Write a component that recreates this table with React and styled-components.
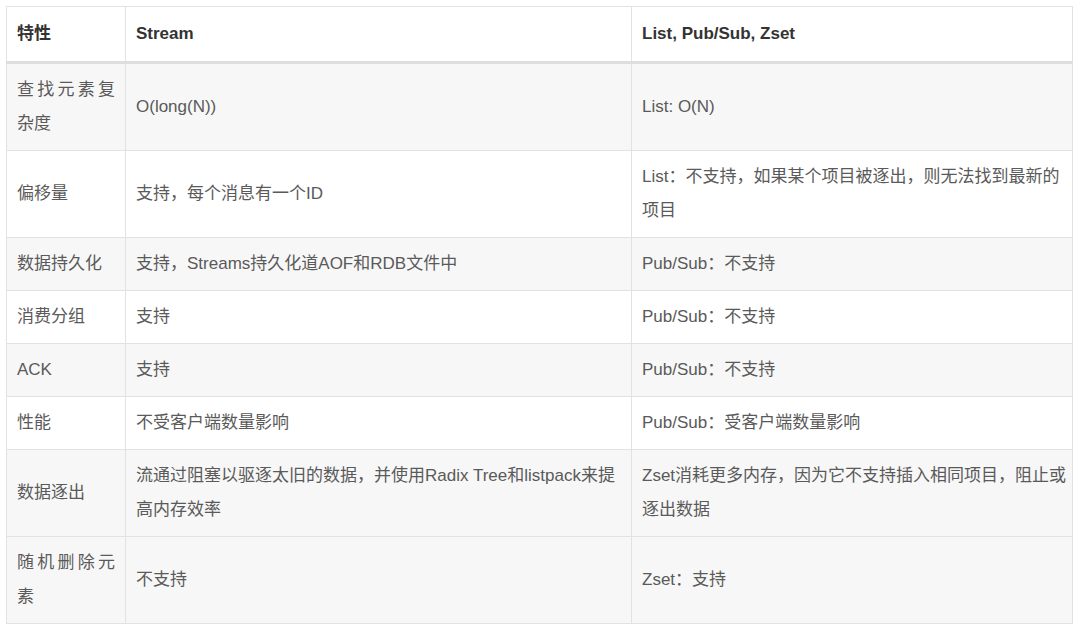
import React from 'react'
import styled, { createGlobalStyle } from 'styled-components'

const GlobalStyle = createGlobalStyle`
  body {
    margin: 0;
    padding: 6px;
    background: #ffffff;
    font-family: "Liberation Sans", "Noto Sans CJK SC", sans-serif;
  }
`

const Table = styled.table`
  width: 1066px;
  table-layout: fixed;
  border-collapse: collapse;
  font-size: 17px;
  color: #5a5a5a;
`

const HeadCell = styled.th`
  box-sizing: border-box;
  width: ${p => p.$w}px;
  padding: 10px 10px;
  line-height: 34px;
  text-align: left;
  font-weight: bold;
  color: #333333;
  background: #ffffff;
  border: 1px solid #e2e2e2;
  border-bottom: 3px solid #dedede;
`

const Row = styled.tr`
  background: ${p => (p.$grey ? '#f7f7f7' : '#ffffff')};
`

const Cell = styled.td`
  padding: 9px ${p => (p.$justify ? 10 : 5)}px 9px 10px;
  line-height: 34px;
  text-align: ${p => (p.$justify ? 'justify' : 'left')};
  vertical-align: middle;
  border: 1px solid #e2e2e2;
  word-break: break-all;
`

const rows = [
  ['查找元素复杂度', 'O(long(N))', 'List: O(N)'],
  ['偏移量', '支持，每个消息有一个ID', 'List：不支持，如果某个项目被逐出，则无法找到最新的项目'],
  ['数据持久化', '支持，Streams持久化道AOF和RDB文件中', 'Pub/Sub：不支持'],
  ['消费分组', '支持', 'Pub/Sub：不支持'],
  ['ACK', '支持', 'Pub/Sub：不支持'],
  ['性能', '不受客户端数量影响', 'Pub/Sub：受客户端数量影响'],
  ['数据逐出', '流通过阻塞以驱逐太旧的数据，并使用Radix Tree和listpack来提高内存效率', 'Zset消耗更多内存，因为它不支持插入相同项目，阻止或逐出数据'],
  ['随机删除元素', '不支持', 'Zset：支持']
]

const greyRows = [true, false, true, false, true, false, true, true]

export default function App () {
  return (
    <>
      <GlobalStyle />
      <Table>
        <thead>
          <tr>
            <HeadCell $w={119}>特性</HeadCell>
            <HeadCell $w={506}>Stream</HeadCell>
            <HeadCell $w={441}>List, Pub/Sub, Zset</HeadCell>
          </tr>
        </thead>
        <tbody>
          {rows.map((row, index) => (
            <Row key={index} $grey={greyRows[index]}>
              <Cell $justify>{row[0]}</Cell>
              <Cell>{row[1]}</Cell>
              <Cell>{row[2]}</Cell>
            </Row>
          ))}
        </tbody>
      </Table>
    </>
  )
}
